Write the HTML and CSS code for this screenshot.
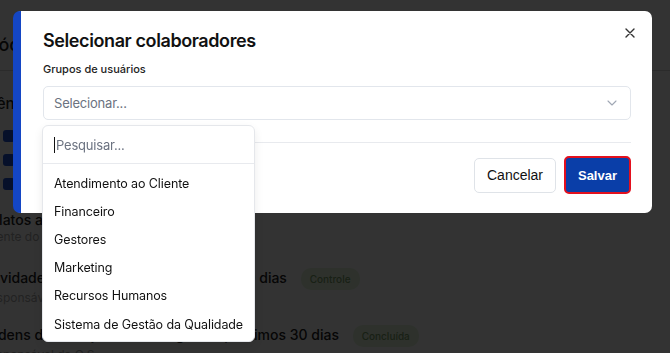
FILE: index.html
```html
<!DOCTYPE html>
<html lang="pt-BR">
<head>
    <meta charset="UTF-8">
    <meta name="viewport" content="width=device-width, initial-scale=1.0">
    <title>Selecionar colaboradores</title>
    <link rel="stylesheet" href="styles.css">
</head>
<body>
    <div class="page">
        <h2 class="page-title">Módulos</h2>
        <div class="page-section">Ciência</div>
        <div class="checks">
            <span class="check"></span>
            <span class="check"></span>
            <span class="check"></span>
        </div>
        <div class="rows">
            <div class="row">
                <div class="row-title">Relatos adicionados</div>
                <div class="row-sub">Cliente do item</div>
            </div>
            <div class="row">
                <div class="row-title">Atividades com entrega nos próximos 30 dias <span class="badge">Controle</span></div>
                <div class="row-sub">Responsável e participantes da atividade</div>
            </div>
            <div class="row">
                <div class="row-title">Ordens de serviço com entrega nos próximos 30 dias <span class="badge">Concluída</span></div>
                <div class="row-sub">Responsável da O.S.</div>
            </div>
        </div>
    </div>

    <div class="overlay"></div>

    <div class="modal">
        <button class="close-btn" aria-label="Fechar">
            <svg width="10" height="10" viewBox="0 0 10 10"><path d="M1 1 L9 9 M9 1 L1 9" stroke="#333" stroke-width="1.4" stroke-linecap="round"/></svg>
        </button>
        <h1 class="modal-title">Selecionar colaboradores</h1>
        <label class="field-label">Grupos de usuários</label>
        <div class="select">
            <span class="select-placeholder">Selecionar...</span>
            <svg width="10" height="6" viewBox="0 0 10 6"><path d="M1 1 L5 5 L9 1" fill="none" stroke="#a0a7b4" stroke-width="1.1" stroke-linecap="round" stroke-linejoin="round"/></svg>
        </div>
        <div class="modal-footer">
            <button class="btn btn-cancel">Cancelar</button>
            <button class="btn btn-save">Salvar</button>
        </div>

        <div class="dropdown">
            <div class="dropdown-search"><span class="caret"></span>Pesquisar...</div>
            <ul class="dropdown-list">
                <li>Atendimento ao Cliente</li>
                <li>Financeiro</li>
                <li>Gestores</li>
                <li>Marketing</li>
                <li>Recursos Humanos</li>
                <li>Sistema de Gestão da Qualidade</li>
            </ul>
        </div>
    </div>
</body>
</html>
```

FILE: styles.css
```css
html, body {
    overflow: hidden;
}
body {
    margin: 0;
    font-family: Inter, "Noto Sans", sans-serif;
    background: #fff;
    height: 353px;
}
.page {
    margin-left: -18px;
    padding-top: 34px;
    color: #222;
}
.page-title {
    margin: 0;
    font-size: 18px;
    font-weight: 500;
    line-height: 22px;
    padding-bottom: 14px;
    border-bottom: 1px solid #d5d5d5;
}
.page-section {
    margin-top: 23px;
    font-size: 15px;
    font-weight: 500;
    line-height: 20px;
}
.checks {
    display: flex;
    flex-direction: column;
    gap: 12px;
    margin-top: 16px;
    padding-left: 21px;
}
.check {
    width: 12px;
    height: 12px;
    border-radius: 3px;
    background: #1f4fd1;
}
.rows {
    margin-top: 21px;
    display: flex;
    flex-direction: column;
}
.row {
    height: 57px;
}
.row-title {
    font-size: 14px;
    font-weight: 500;
    line-height: 18px;
}
.row-sub {
    font-size: 12px;
    color: #aaa;
    line-height: 16px;
}
.badge {
    display: inline-block;
    margin-left: 10px;
    padding: 2px 9px;
    border-radius: 10px;
    background: #e4f6dc;
    color: #7aa06a;
    font-size: 10px;
}
.overlay {
    position: fixed;
    inset: 0;
    background: rgba(0, 0, 0, 0.8);
}
.modal {
    position: absolute;
    top: 11px;
    left: 13px;
    width: 639px;
    box-sizing: border-box;
    padding: 16px 21px 19px 22px;
    background: #fff;
    border-left: 8px solid #1446c4;
    border-radius: 7px;
    display: flex;
    flex-direction: column;
}
.close-btn {
    position: absolute;
    top: 17px;
    right: 17px;
    width: 10px;
    height: 10px;
    padding: 0;
    border: none;
    background: none;
    display: flex;
}
.modal-title {
    margin: 0;
    font-size: 18px;
    font-weight: 600;
    line-height: 28px;
    color: #111;
    letter-spacing: -0.4px;
}
.field-label {
    margin-top: 6px;
    font-size: 11px;
    font-weight: 500;
    line-height: 16px;
    color: #222;
}
.select {
    margin-top: 9px;
    height: 32px;
    border: 1px solid #e2e6ec;
    border-radius: 5px;
    display: flex;
    align-items: center;
    justify-content: space-between;
    padding: 0 13px 0 10px;
}
.select-placeholder {
    font-size: 13px;
    letter-spacing: -0.2px;
    color: #6b7280;
}
.modal-footer {
    margin-top: 22px;
    padding-top: 13px;
    border-top: 1px solid #e8eaee;
    display: flex;
    align-items: center;
    justify-content: flex-end;
    gap: 8px;
}
.btn {
    font-family: "Liberation Sans", Arial, sans-serif;
    border-radius: 5px;
    cursor: pointer;
}
.btn-cancel {
    height: 35px;
    width: 82px;
    font-size: 14px;
    background: #fff;
    border: 1px solid #dfe3e8;
    color: #111;
}
.btn-save {
    height: 38px;
    width: 67px;
    font-size: 13px;
    background: #0a3ea8;
    border: 2px solid #e3101e;
    color: #fff;
    font-weight: 700;
}
.dropdown {
    position: absolute;
    top: 114px;
    left: 21px;
    width: 211px;
    background: #fff;
    border: 1px solid #e5e7eb;
    border-radius: 6px;
    box-shadow: 0 4px 10px rgba(0, 0, 0, 0.08);
}
.dropdown-search {
    height: 37px;
    display: flex;
    align-items: center;
    padding-left: 11px;
    font-size: 13px;
    letter-spacing: -0.2px;
    color: #6b7280;
    border-bottom: 1px solid #e8eaee;
}
.caret {
    width: 1px;
    height: 16px;
    background: #111;
    margin-right: 1px;
}
.dropdown-list {
    list-style: none;
    margin: 0;
    padding: 5px 0 3px;
}
.dropdown-list li {
    height: 28.2px;
    display: flex;
    align-items: center;
    padding-left: 11px;
    font-size: 12.5px;
    letter-spacing: -0.1px;
    color: #111;
}
```
